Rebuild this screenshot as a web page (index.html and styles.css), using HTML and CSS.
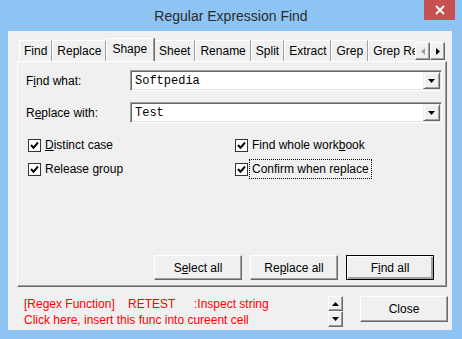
FILE: index.html
```html
<!DOCTYPE html>
<html lang="en">
<head>
    <meta charset="UTF-8">
    <title>Regular Expression Find</title>
    <link rel="stylesheet" href="styles.css">
</head>
<body>
    <div class="window">
        <!-- Barra de titulo -->
        <div class="titlebar">
            <span class="title">Regular Expression Find</span>
            <div class="close-x">
                <svg width="10" height="10" viewBox="0 0 10 10"><path d="M1 1 L9 9 M9 1 L1 9" stroke="#fff" stroke-width="1.8"/></svg>
            </div>
        </div>

        <div class="client">
            <!-- Abas -->
            <div class="tabs">
                <div class="tab-list">
                    <div class="tab">Find</div>
                    <div class="tab">Replace</div>
                    <div class="tab selected">Shape</div>
                    <div class="tab">Sheet</div>
                    <div class="tab">Rename</div>
                    <div class="tab">Split</div>
                    <div class="tab">Extract</div>
                    <div class="tab">Grep</div>
                    <div class="tab">Grep Replace</div>
                </div>
                <div class="tab-scroll">
                    <div class="scroll-btn">
                        <svg width="4" height="7" viewBox="0 0 4 7"><polygon points="4,0 4,7 0,3.5" fill="#a0a0a0"/></svg>
                    </div>
                    <div class="scroll-btn">
                        <svg width="4" height="7" viewBox="0 0 4 7"><polygon points="0,0 0,7 4,3.5" fill="#000"/></svg>
                    </div>
                </div>
            </div>

            <!-- Painel da aba -->
            <div class="panel">
                <div class="row">
                    <label class="field-label">F<u>i</u>nd what:</label>
                    <div class="combo">
                        <span class="combo-text">Softpedia</span>
                        <div class="drop">
                            <svg width="7" height="4" viewBox="0 0 7 4"><polygon points="0,0 7,0 3.5,4" fill="#000"/></svg>
                        </div>
                    </div>
                </div>
                <div class="row">
                    <label class="field-label">R<u>e</u>place with:</label>
                    <div class="combo">
                        <span class="combo-text">Test</span>
                        <div class="drop">
                            <svg width="7" height="4" viewBox="0 0 7 4"><polygon points="0,0 7,0 3.5,4" fill="#000"/></svg>
                        </div>
                    </div>
                </div>

                <div class="checks">
                    <div class="check">
                        <span class="box"><svg width="11" height="11" viewBox="0 0 11 11"><polyline points="2,5 4.5,7.8 9,2.5" fill="none" stroke="#000" stroke-width="2"/></svg></span>
                        <span class="check-text"><u>D</u>istinct case</span>
                    </div>
                    <div class="check">
                        <span class="box"><svg width="11" height="11" viewBox="0 0 11 11"><polyline points="2,5 4.5,7.8 9,2.5" fill="none" stroke="#000" stroke-width="2"/></svg></span>
                        <span class="check-text">Find whole work<u>b</u>ook</span>
                    </div>
                    <div class="check">
                        <span class="box"><svg width="11" height="11" viewBox="0 0 11 11"><polyline points="2,5 4.5,7.8 9,2.5" fill="none" stroke="#000" stroke-width="2"/></svg></span>
                        <span class="check-text">Release <u>g</u>roup</span>
                    </div>
                    <div class="check">
                        <span class="box"><svg width="11" height="11" viewBox="0 0 11 11"><polyline points="2,5 4.5,7.8 9,2.5" fill="none" stroke="#000" stroke-width="2"/></svg></span>
                        <span class="check-text focus">Confirm when replace</span>
                    </div>
                </div>

                <div class="actions">
                    <button class="btn">S<u>e</u>lect all</button>
                    <button class="btn">Re<u>p</u>lace all</button>
                    <button class="btn default">F<u>i</u>nd all</button>
                </div>
            </div>

            <!-- Rodape -->
            <div class="footer">
                <div class="info">
                    <div><span class="info-tag">[Regex Function]</span><span class="info-name">RETEST</span><span>:Inspect string</span></div>
                    <div>Click here, insert this func into cureent cell</div>
                </div>
                <div class="spin">
                    <div class="spin-btn up">
                        <svg width="7" height="4" viewBox="0 0 7 4"><polygon points="0,4 7,4 3.5,0" fill="#000"/></svg>
                    </div>
                    <div class="spin-btn down">
                        <svg width="7" height="4" viewBox="0 0 7 4"><polygon points="0,0 7,0 3.5,4" fill="#000"/></svg>
                    </div>
                </div>
                <button class="btn close-btn">Close</button>
            </div>
        </div>
    </div>
</body>
</html>
```

FILE: styles.css
```css
body {
    margin: 0;
    font-family: "Liberation Sans", Arial, sans-serif;
    font-size: 12px;
    color: #000;
}
.window {
    width: 462px;
    height: 339px;
    background: #8ec4f4;
    display: flex;
    flex-direction: column;
}
.titlebar {
    position: relative;
    height: 31px;
    display: flex;
    align-items: center;
    justify-content: center;
}
.title {
    font-size: 14px;
    color: #2b2b2b;
}
.close-x {
    position: absolute;
    top: 0;
    right: 7px;
    width: 31px;
    height: 20px;
    background: #c75050;
    display: flex;
    align-items: center;
    justify-content: center;
}
.client {
    margin-left: 8px;
    width: 444px;
    height: 299px;
    background: #f0f0f0;
    display: flex;
    flex-direction: column;
}

/* abas */
.tabs {
    display: flex;
    align-items: flex-end;
    margin: 7px 0 0 11px;
    height: 23px;
}
.tab-list {
    display: flex;
    align-items: flex-end;
    width: 396px;
    overflow: hidden;
    height: 23px;
}
.tab {
    flex: none;
    height: 21px;
    line-height: 20px;
    box-sizing: border-box;
    padding: 0 4px;
    border-top: 1px solid #fff;
    border-left: 1px solid #fff;
    border-right: 1px solid #a0a0a0;
    box-shadow: 1px 0 0 #696969;
}
.tab.selected {
    height: 23px;
    line-height: 20px;
    padding: 0 6px 0 5px;
    position: relative;
    z-index: 1;
    background: #f0f0f0;
}
.tab-scroll {
    display: flex;
    margin-bottom: 1px;
}
.scroll-btn {
    width: 15px;
    height: 18px;
    box-sizing: border-box;
    background: #f0f0f0;
    border-top: 1px solid #fff;
    border-left: 1px solid #fff;
    border-right: 1px solid #696969;
    border-bottom: 1px solid #696969;
    box-shadow: inset -1px -1px 0 #a0a0a0;
    display: flex;
    align-items: center;
    justify-content: center;
}

/* painel */
.panel {
    margin-left: 9px;
    width: 430px;
    height: 226px;
    box-sizing: border-box;
    border-top: 1px solid #fff;
    border-left: 1px solid #fff;
    border-right: 1px solid #696969;
    border-bottom: 1px solid #696969;
    box-shadow: inset -1px -1px 0 #a0a0a0;
    padding: 8px 4px 6px 8px;
    display: flex;
    flex-direction: column;
}
.row {
    display: flex;
    align-items: center;
    height: 21px;
}
.row + .row {
    margin-top: 11px;
}
.field-label {
    width: 104px;
    flex: none;
}
.combo {
    flex: 1;
    height: 21px;
    box-sizing: border-box;
    background: #fff;
    border-top: 1px solid #a0a0a0;
    border-left: 1px solid #a0a0a0;
    border-right: 1px solid #fff;
    border-bottom: 1px solid #fff;
    box-shadow: inset 1px 1px 0 #696969, inset -1px -1px 0 #e3e3e3;
    display: flex;
    align-items: center;
    padding: 1px 1px 1px 4px;
}
.combo-text {
    flex: 1;
    font-family: "Liberation Mono", "Courier New", monospace;
    font-size: 12px;
}
.drop {
    width: 17px;
    height: 17px;
    box-sizing: border-box;
    background: #f0f0f0;
    border-top: 1px solid #f0f0f0;
    border-left: 1px solid #f0f0f0;
    border-right: 1px solid #696969;
    border-bottom: 1px solid #696969;
    box-shadow: inset 1px 1px 0 #fff, inset -1px -1px 0 #a0a0a0;
    display: flex;
    align-items: center;
    justify-content: center;
}

/* caixas de selecao */
.checks {
    display: grid;
    grid-template-columns: 207px 1fr;
    row-gap: 6px;
    margin-top: 13px;
    padding-left: 2px;
}
.check {
    display: flex;
    align-items: center;
    height: 18px;
}
.box {
    width: 13px;
    height: 13px;
    box-sizing: border-box;
    background: #fff;
    border: 1px solid #333;
    display: flex;
    align-items: center;
    justify-content: center;
    margin-right: 4px;
}
.check-text {
    line-height: 14px;
}
.focus {
    outline: 1px dotted #000;
    outline-offset: 2px;
}

/* botoes */
.actions {
    margin-top: auto;
    margin-right: 8px;
    display: flex;
    justify-content: flex-end;
    gap: 8px;
}
.btn {
    width: 88px;
    height: 25px;
    box-sizing: border-box;
    font-family: "Liberation Sans", Arial, sans-serif;
    font-size: 12px;
    color: #000;
    background: #f0f0f0;
    border-top: 1px solid #fff;
    border-left: 1px solid #fff;
    border-right: 1px solid #696969;
    border-bottom: 1px solid #696969;
    box-shadow: inset -1px -1px 0 #a0a0a0;
    padding: 0;
}
.btn.default {
    border: 1px solid #000;
    box-shadow: inset 1px 1px 0 #fff, inset -2px -2px 0 #a0a0a0, inset -1px -1px 0 #696969;
}

/* rodape */
.footer {
    display: flex;
    margin-top: 9px;
    padding-left: 16px;
}
.info {
    width: 304px;
    color: #ff0000;
    line-height: 16px;
}
.info-tag {
    display: inline-block;
    width: 104px;
}
.info-name {
    display: inline-block;
    width: 66px;
}
.spin {
    display: flex;
    flex-direction: column;
    width: 15px;
}
.spin-btn {
    height: 15px;
    box-sizing: border-box;
    background: #f0f0f0;
    border-top: 1px solid #fff;
    border-left: 1px solid #fff;
    border-right: 1px solid #696969;
    border-bottom: 1px solid #696969;
    box-shadow: inset -1px -1px 0 #a0a0a0;
    display: flex;
    align-items: center;
    justify-content: center;
}
.spin-btn.down {
    height: 16px;
}
.close-btn {
    margin-left: 17px;
    height: 26px;
}
```
